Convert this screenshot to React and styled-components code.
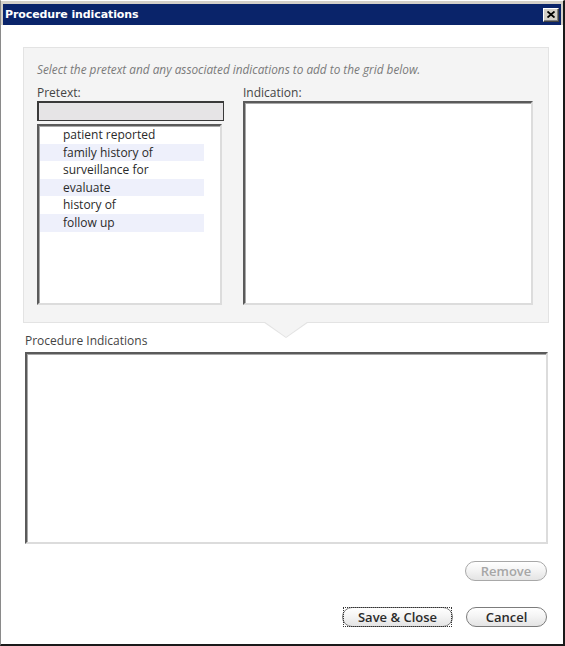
import React from 'react';
import styled, { createGlobalStyle } from 'styled-components';

const Global = createGlobalStyle`
  html, body { margin: 0; padding: 0; background: #fff; }
  body { font-family: "Open Sans", "Noto Sans", sans-serif; }
  *, *::before, *::after { box-sizing: border-box; }
`;

const Window = styled.div`
  width: 565px;
  height: 646px;
  display: flex;
  flex-direction: column;
  background: #fff;
  border-style: solid;
  border-width: 1px 2px 2px 1px;
  border-color: #d4d0c8 #1a1a1a #1a1a1a #8a8a8a;
`;

const Caption = styled.div`
  background: #d4d0c8;
  padding: 3px 2px 0 2px;
  border-top: 1px solid #fff;
  margin-top: -1px;
`;

const TitleBar = styled.div`
  height: 21px;
  background: #0a246a;
  display: flex;
  align-items: center;
  justify-content: space-between;
  padding: 0 2px 0 2px;
`;

const Title = styled.span`
  font-family: "DejaVu Sans", Verdana, sans-serif;
  font-weight: bold;
  font-size: 11px;
  color: #fff;
  letter-spacing: -0.1px;
`;

const CloseButton = styled.div`
  width: 16px;
  height: 14px;
  background: #d4d0c8;
  border: 1px solid;
  border-color: #fff #404040 #404040 #fff;
  box-shadow: inset -1px -1px 0 #808080;
  display: flex;
  align-items: center;
  justify-content: center;
`;

const Body = styled.div`
  flex: 1;
  display: flex;
  flex-direction: column;
  padding: 22px 14px 0 22px;
`;

const Panel = styled.div`
  position: relative;
  background: #f4f4f4;
  border: 1px solid #e3e3e3;
  padding: 13px 15px 17px 13px;

  &::before {
    content: "";
    position: absolute;
    left: 50%;
    top: 100%;
    transform: translateX(-50%);
    width: 0;
    height: 0;
    border-left: 23px solid transparent;
    border-right: 23px solid transparent;
    border-top: 16px solid #e3e3e3;
  }
  &::after {
    content: "";
    position: absolute;
    left: 50%;
    top: 100%;
    transform: translateX(-50%);
    width: 0;
    height: 0;
    border-left: 21px solid transparent;
    border-right: 21px solid transparent;
    border-top: 15px solid #f4f4f4;
  }
`;

const Instruction = styled.div`
  font-style: italic;
  font-size: 11.8px;
  line-height: 16px;
  color: #7a7a7a;
  margin-bottom: 8px;
  white-space: nowrap;
`;

const Columns = styled.div`
  display: grid;
  grid-template-columns: 187px 1fr;
  column-gap: 19px;
`;

const Field = styled.div`
  display: flex;
  flex-direction: column;
`;

const Label = styled.div`
  font-size: 12px;
  line-height: ${p => p.$lh || 15}px;
  color: #444;
  margin-bottom: ${p => p.$mb || 1}px;
`;

const TextBox = styled.div`
  height: 20px;
  background: #e6e4e6;
  border: 1px solid #3a3a3a;
  border-top-width: 2px;
  border-left-width: 2px;
`;

const Inset = styled.div`
  height: ${p => p.$h}px;
  background: #fff;
  border: 2px solid;
  border-color: #5a5a5a #dcdcdc #dcdcdc #5a5a5a;
  box-shadow: inset 1px 1px 0 #a8a8a8;
`;

const ListBox = styled(Inset)`
  margin-top: 3px;
  margin-right: 2px;
  padding: 0 0 0 1px;
  display: flex;
  flex-direction: column;
`;

const ListItem = styled.div`
  width: 164px;
  height: 17.6px;
  padding-left: 23px;
  font-size: 12px;
  line-height: 17.6px;
  color: #2a2a2a;
  white-space: nowrap;
  background: ${p => (p.$alt ? '#eef0fb' : 'transparent')};
`;

const ProcedureSection = styled.div`
  display: flex;
  flex-direction: column;
  margin: 10px 1px 0 2px;
`;

const ButtonRow = styled.div`
  display: flex;
  justify-content: flex-end;
  gap: 13px;
  margin-top: ${p => p.$mt}px;
  margin-right: 2px;
`;

const Button = styled.div`
  position: relative;
  width: ${p => p.$w}px;
  height: 20px;
  border-radius: 10px;
  border: 1px solid ${p => (p.$disabled ? '#a8a8a8' : '#7c7c7c')};
  background: linear-gradient(#ffffff, #f4f4f4 45%, #e4e4e4);
  display: flex;
  align-items: center;
  justify-content: center;
  font-size: 13px;
  font-weight: 600;
  line-height: 18px;
  color: ${p => (p.$disabled ? '#a6a6a6' : '#2a2a2a')};
  white-space: nowrap;

  ${p =>
    p.$focused &&
    `&::after {
      content: "";
      position: absolute;
      inset: -1px 0;
      border: 1px dotted #333;
    }`}
`;

const items = [
  'patient reported',
  'family history of',
  'surveillance for',
  'evaluate',
  'history of',
  'follow up',
];

export default function App() {
  return (
    <>
      <Global />
      <Window>
        <Caption>
          <TitleBar>
            <Title>Procedure indications</Title>
            <CloseButton>
              <svg width="8" height="7" viewBox="0 0 8 7">
                <path d="M0.5 0.5 L7.5 6.5 M7.5 0.5 L0.5 6.5" stroke="#000" strokeWidth="1.8" />
              </svg>
            </CloseButton>
          </TitleBar>
        </Caption>
        <Body>
          <Panel>
            <Instruction>
              Select the pretext and any associated indications to add to the grid below.
            </Instruction>
            <Columns>
              <Field>
                <Label>Pretext:</Label>
                <TextBox />
                <ListBox $h={181}>
                  {items.map((t, i) => (
                    <ListItem key={t} $alt={i % 2 === 1}>
                      {t}
                    </ListItem>
                  ))}
                </ListBox>
              </Field>
              <Field>
                <Label>Indication:</Label>
                <Inset $h={204} />
              </Field>
            </Columns>
          </Panel>
          <ProcedureSection>
            <Label $lh={16} $mb={3}>Procedure Indications</Label>
            <Inset $h={192} />
          </ProcedureSection>
          <ButtonRow $mt={17}>
            <Button $w={82} $disabled>Remove</Button>
          </ButtonRow>
          <ButtonRow $mt={26}>
            <Button $w={111} $focused>Save &amp; Close</Button>
            <Button $w={81}>Cancel</Button>
          </ButtonRow>
        </Body>
      </Window>
    </>
  );
}
